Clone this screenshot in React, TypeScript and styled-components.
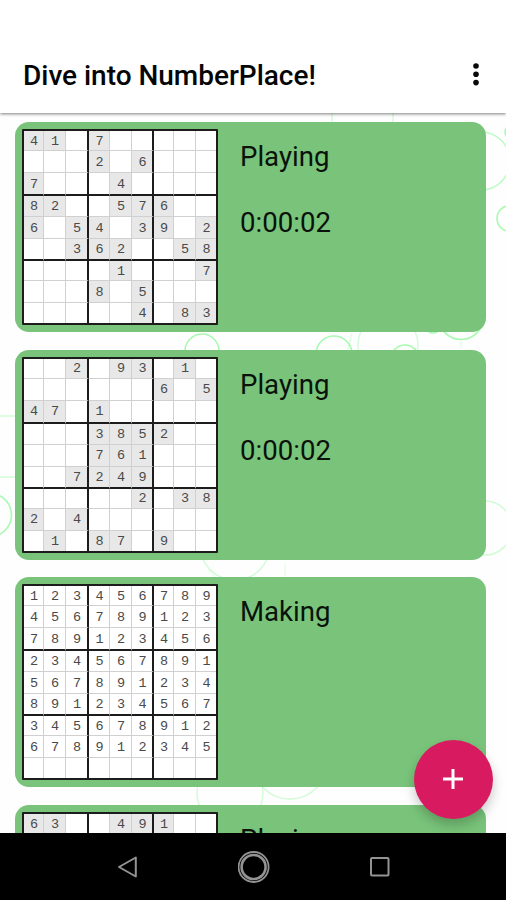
import React from "react";
import styled, { createGlobalStyle } from "styled-components";

const GlobalStyle = createGlobalStyle`
  * { box-sizing: border-box; }
  body { margin: 0; background: #fff; overflow: hidden; }
`;

const Screen = styled.div`
  position: relative;
  display: flex;
  flex-direction: column;
  width: 506px;
  height: 900px;
  overflow: hidden;
  background: #fefefe;
  color: #0a120a;
  font-family: Roboto, "Liberation Sans", sans-serif;
`;

const AppBar = styled.header`
  display: flex;
  align-items: flex-end;
  justify-content: space-between;
  flex: none;
  height: 113px;
  padding: 0 26px 19px 23px;
  background: #fff;
  box-shadow: 0 1px 3px rgba(0, 0, 0, 0.5);
  z-index: 1;
`;

const Title = styled.h1`
  margin: 0;
  font-size: 28px;
  line-height: 36px;
  font-weight: 500;
  letter-spacing: -0.02px;
  color: #050505;
  white-space: nowrap;
`;

const MenuButton = styled.button`
  display: flex;
  padding: 0;
  margin-bottom: 8px;
  border: 0;
  background: none;
`;

const Content = styled.main`
  position: relative;
  flex: 1;
  min-height: 0;
  overflow: hidden;
`;

const Backdrop = styled.svg`
  position: absolute;
  inset: 0;
  fill: none;
  stroke: #a8fab0;
`;

const List = styled.div`
  position: relative;
  display: flex;
  flex-direction: column;
  gap: 17.7px;
  padding: 9px 20px 0 15px;
`;

const Card = styled.article`
  display: flex;
  flex: none;
  gap: 22px;
  height: 210px;
  padding: 7px;
  border-radius: 14px;
  background: #79c47a;
`;

const Board = styled.div`
  display: grid;
  flex: none;
  width: 196px;
  height: 196px;
  grid-template-columns: 20px 22px 23px 21px 22px 22px 20px 22px 20px;
  grid-template-rows: 20px 22px 23px 21px 22px 22px 20px 22px 20px;
  border: 2px solid #1c1c1c;
  border-radius: 1px;
  background: #fff;
`;

const Cell = styled.div<{ $given: boolean; $right: string; $bottom: string }>`
  display: flex;
  align-items: center;
  justify-content: center;
  padding: 2px 0 0 1px;
  border-right: ${(p) => p.$right};
  border-bottom: ${(p) => p.$bottom};
  background: ${(p) => (p.$given ? "#e8e8e8" : "#fff")};
  color: #4a4a4a;
  font: 13.5px/14px "Liberation Mono", monospace;
`;

const Info = styled.div`
  display: flex;
  flex-direction: column;
  gap: 33px;
  padding-top: 11px;
  font-size: 27.6px;
  line-height: 33px;
`;

const AddButton = styled.button`
  position: absolute;
  left: 414px;
  top: 740px;
  z-index: 2;
  display: flex;
  align-items: center;
  justify-content: center;
  width: 79px;
  height: 79px;
  padding: 0 1px 1px 0;
  border: 0;
  border-radius: 50%;
  background: #d81b60;
  box-shadow: 0 6px 12px rgba(0, 0, 0, 0.22);
`;

const NavBar = styled.nav`
  display: flex;
  align-items: center;
  justify-content: space-between;
  flex: none;
  height: 67px;
  padding: 0 116px 0 117px;
  background: #000;
  z-index: 1;
`;

const NavIcon = styled.svg`
  fill: none;
  stroke: #939393;
  stroke-width: 2;
  stroke-linejoin: round;
`;

type Puzzle = { status: string; time?: string; rows: string[] };

const puzzles: Puzzle[] = [
  {
    status: "Playing",
    time: "0:00:02",
    rows: [
      "41.7.....", "...2.6...", "7...4....",
      "82..576..", "6.54.39.2", "..362..58",
      "....1...7", "...8.5...", ".....4.83",
    ],
  },
  {
    status: "Playing",
    time: "0:00:02",
    rows: [
      "..2.93.1.", "......6.5", "47.1.....",
      "...3852..", "...761...", "..7249...",
      ".....2.38", "2.4......", ".1.87.9..",
    ],
  },
  {
    status: "Making",
    rows: [
      "123456789", "456789123", "789123456",
      "234567891", "567891234", "891234567",
      "345678912", "678912345", ".........",
    ],
  },
  {
    status: "Playing",
    rows: [
      "63..491..", ".........", ".........",
      ".........", ".........", ".........",
      ".........", ".........", ".........",
    ],
  },
];

const edge = (i: number) =>
  i === 8 ? "0" : i % 3 === 2 ? "2px solid #1c1c1c" : "1px solid #d0d0d0";

function PuzzleCard({ puzzle }: { puzzle: Puzzle }) {
  return (
    <Card>
      <Board>
        {puzzle.rows.flatMap((row, r) =>
          row.split("").map((value, c) => (
            <Cell
              key={`${r}-${c}`}
              $given={value !== "." && puzzle.status === "Playing"}
              $right={edge(c)}
              $bottom={edge(r)}
            >
              {value === "." ? "" : value}
            </Cell>
          ))
        )}
      </Board>
      <Info>
        <span>{puzzle.status}</span>
        {puzzle.time && <span>{puzzle.time}</span>}
      </Info>
    </Card>
  );
}

export default function App() {
  return (
    <>
      <GlobalStyle />
      <Screen>
        <AppBar>
          <Title>Dive into NumberPlace!</Title>
          <MenuButton aria-label="More options">
            <svg width="8" height="24" viewBox="0 0 8 24" fill="#0a0a0a">
              <circle cx="4" cy="4" r="2.8" />
              <circle cx="4" cy="12.2" r="2.8" />
              <circle cx="4" cy="20.6" r="2.8" />
            </svg>
          </MenuButton>
        </AppBar>
        <Content>
          <Backdrop width="506" height="720" viewBox="0 113 506 720">
            <g strokeWidth="1.6">
              <circle cx="481" cy="161" r="29" strokeOpacity=".75" />
              <circle cx="510" cy="218.5" r="13" />
              <circle cx="202" cy="351" r="17" />
              <circle cx="334" cy="354" r="18" />
              <circle cx="461" cy="317" r="22.5" />
              <circle cx="405" cy="359" r="14" />
              <circle cx="433" cy="325" r="8" />
              <circle cx="-10" cy="515" r="21.5" />
              <circle cx="485" cy="528" r="27" strokeOpacity=".5" />
              <circle cx="512" cy="132" r="7" />
            </g>
            <g strokeWidth="1.4" strokeOpacity=".5">
              <path d="M0 416H15M0 477H15M332 113v10M393 113v10" />
              <circle cx="235" cy="545" r="35" />
              <circle cx="230" cy="793" r="33" />
              <circle cx="290" cy="762" r="37" />
              <circle cx="388" cy="345" r="30" strokeOpacity=".5" />
              <path d="M352 333l-4 16M461 342v5" strokeOpacity=".35" />
              <path d="M208 570q5 3 7 8M285 563v14" strokeOpacity=".25" />
            </g>
          </Backdrop>
          <List>
            {puzzles.map((p, i) => (
              <PuzzleCard key={i} puzzle={p} />
            ))}
          </List>
        </Content>
        <AddButton aria-label="New puzzle">
          <svg width="22" height="22" viewBox="0 0 22 22" stroke="#fff" strokeWidth="3">
            <path d="M11 1v20M1 11h20" />
          </svg>
        </AddButton>
        <NavBar>
          <NavIcon width="22" height="24" viewBox="0 0 22 24">
            <path d="M18.8 2.5v19L2 12z" />
          </NavIcon>
          <NavIcon width="34" height="34" viewBox="1.4 0 34 34">
            <circle cx="17" cy="17" r="15" strokeWidth="1.8" />
            <circle cx="17" cy="17" r="12" strokeWidth="2.6" />
          </NavIcon>
          <NavIcon width="20" height="20" viewBox="0 0 20 20">
            <rect x="1" y="1" width="17.5" height="17.5" rx="1" />
          </NavIcon>
        </NavBar>
      </Screen>
    </>
  );
}
